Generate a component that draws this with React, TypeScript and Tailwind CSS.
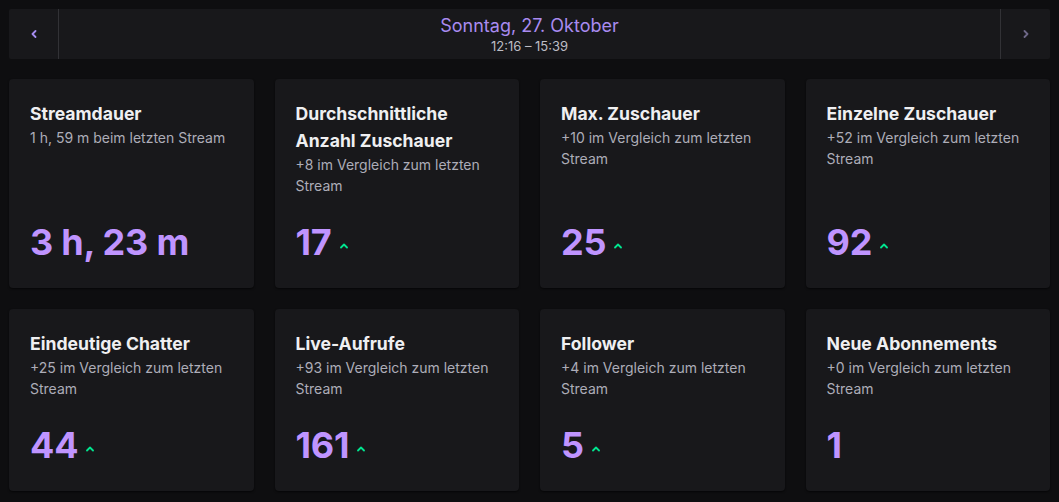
import React from 'react';

interface Stat {
  title: string;
  sub: string;
  value: string;
  up?: boolean;
}

const stats: Stat[] = [
  { title: 'Streamdauer', sub: '1 h, 59 m beim letzten Stream', value: '3 h, 23 m' },
  { title: 'Durchschnittliche Anzahl Zuschauer', sub: '+8 im Vergleich zum letzten Stream', value: '17', up: true },
  { title: 'Max. Zuschauer', sub: '+10 im Vergleich zum letzten Stream', value: '25', up: true },
  { title: 'Einzelne Zuschauer', sub: '+52 im Vergleich zum letzten Stream', value: '92', up: true },
  { title: 'Eindeutige Chatter', sub: '+25 im Vergleich zum letzten Stream', value: '44', up: true },
  { title: 'Live-Aufrufe', sub: '+93 im Vergleich zum letzten Stream', value: '161', up: true },
  { title: 'Follower', sub: '+4 im Vergleich zum letzten Stream', value: '5', up: true },
  { title: 'Neue Abonnements', sub: '+0 im Vergleich zum letzten Stream', value: '1' },
];

function Chevron({ dir }: { dir: 'left' | 'right' }) {
  return (
    <svg
      width="6"
      height="8"
      viewBox="0 0 6 8"
      className={dir === 'left' ? 'text-[#a58cf0]' : 'text-[#6e6888]'}
    >
      <path
        d={dir === 'left' ? 'M4.5 1 L1.5 4 L4.5 7' : 'M1.5 1 L4.5 4 L1.5 7'}
        fill="none"
        stroke="currentColor"
        strokeWidth="1.8"
        strokeLinecap="round"
        strokeLinejoin="round"
      />
    </svg>
  );
}

function UpCaret() {
  return (
    <svg width="8" height="6" viewBox="0 0 8 6" className="text-[#00e58f] ml-[8px] mt-[7px]">
      <path d="M1 4.5 L4 1.5 L7 4.5" fill="none" stroke="currentColor" strokeWidth="1.8" strokeLinecap="round" strokeLinejoin="round" />
    </svg>
  );
}

function StatCard({ stat }: { stat: Stat }) {
  return (
    <div className="flex flex-col bg-[#18181b] rounded-[4px] shadow-[0_1px_2px_rgba(0,0,0,0.6)] pt-[21px] px-[21px] pb-[26px]">
      <div className="text-[17.6px] leading-[27px] font-bold text-[#efeff1]">{stat.title}</div>
      <div className="text-[14px] leading-[21px] text-[#adadb8]">{stat.sub}</div>
      <div className="mt-auto pt-[26px] flex items-center h-[66px]">
        <span className="text-[36px] leading-[40px] font-bold text-[#bf94ff] tracking-[-0.2px]">{stat.value}</span>
        {stat.up && <UpCaret />}
      </div>
    </div>
  );
}

export default function App() {
  return (
    <div className="min-h-screen bg-[#0e0e10] px-[9px] pt-[9px] font-['Inter',sans-serif]">
      <div className="flex h-[50px] bg-[#18181b] rounded-[2px]">
        <button className="w-[50px] flex items-center justify-center border-r border-[#323236]">
          <Chevron dir="left" />
        </button>
        <div className="flex-1 flex flex-col items-center justify-center">
          <div className="text-[18px] leading-[22px] text-[#a98bf0]">Sonntag, 27. Oktober</div>
          <div className="text-[13px] leading-[16px] text-[#bdbdc4] mt-[1px]">12:16 – 15:39</div>
        </div>
        <button className="w-[50px] flex items-center justify-center border-l border-[#323236]">
          <Chevron dir="right" />
        </button>
      </div>
      <div className="grid grid-cols-4 gap-[21px] mt-[20px]">
        {stats.map((s) => (
          <StatCard key={s.title} stat={s} />
        ))}
      </div>
    </div>
  );
}
